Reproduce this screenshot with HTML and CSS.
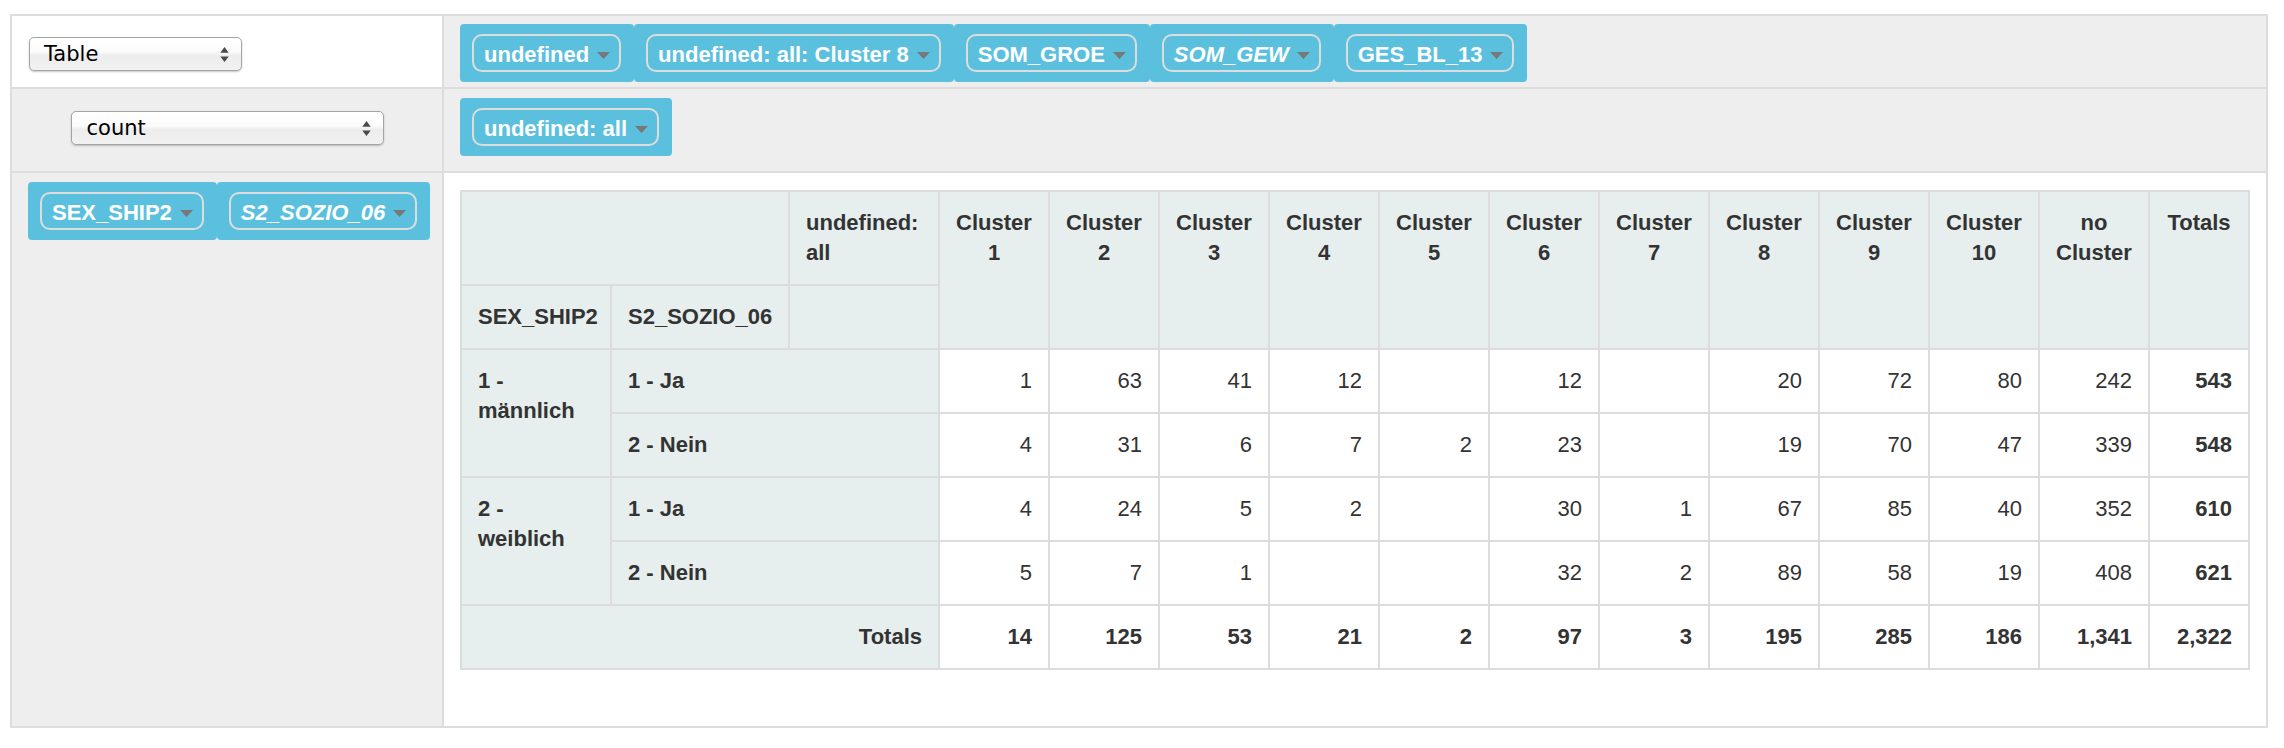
FILE: index.html
```html
<!DOCTYPE html>
<html>
<head>
<meta charset="utf-8">
<title>Pivot</title>
<link rel="stylesheet" href="styles.css">
</head>
<body>
<div class="pvt-ui">
  <div class="cell renderer-cell">
    <div class="select select-renderer"><span>Table</span><svg class="updown" viewBox="0 0 9 16"><polygon points="0,6 4.5,0 9,6"/><polygon points="0,10 4.5,16 9,10"/></svg></div>
  </div>
  <div class="cell cols-axis">
    <ul class="pills">
      <li class="pill"><span class="attr">undefined<svg class="tri" viewBox="0 0 13 7"><polygon points="0,0 13,0 6.5,7"/></svg></span></li>
      <li class="pill"><span class="attr">undefined: all: Cluster 8<svg class="tri" viewBox="0 0 13 7"><polygon points="0,0 13,0 6.5,7"/></svg></span></li>
      <li class="pill"><span class="attr">SOM_GROE<svg class="tri" viewBox="0 0 13 7"><polygon points="0,0 13,0 6.5,7"/></svg></span></li>
      <li class="pill"><span class="attr filtered">SOM_GEW<svg class="tri" viewBox="0 0 13 7"><polygon points="0,0 13,0 6.5,7"/></svg></span></li>
      <li class="pill"><span class="attr">GES_BL_13<svg class="tri" viewBox="0 0 13 7"><polygon points="0,0 13,0 6.5,7"/></svg></span></li>
    </ul>
  </div>
  <div class="cell vals-cell">
    <div class="select select-agg"><span>count</span><svg class="updown" viewBox="0 0 9 16"><polygon points="0,6 4.5,0 9,6"/><polygon points="0,10 4.5,16 9,10"/></svg></div>
  </div>
  <div class="cell vals-axis">
    <ul class="pills">
      <li class="pill"><span class="attr">undefined: all<svg class="tri" viewBox="0 0 13 7"><polygon points="0,0 13,0 6.5,7"/></svg></span></li>
    </ul>
  </div>
  <div class="cell rows-axis">
    <ul class="pills">
      <li class="pill"><span class="attr">SEX_SHIP2<svg class="tri" viewBox="0 0 13 7"><polygon points="0,0 13,0 6.5,7"/></svg></span></li>
      <li class="pill"><span class="attr filtered">S2_SOZIO_06<svg class="tri" viewBox="0 0 13 7"><polygon points="0,0 13,0 6.5,7"/></svg></span></li>
    </ul>
  </div>
  <div class="cell output">
    <table class="pvt-table">
      <colgroup>
        <col class="w150"><col class="w178"><col class="w150">
        <col class="w110"><col class="w110"><col class="w110"><col class="w110"><col class="w110"><col class="w110">
        <col class="w110"><col class="w110"><col class="w110"><col class="w110"><col class="w110">
        <col class="w100">
      </colgroup>
      <thead>
        <tr>
          <th colspan="2"></th>
          <th>undefined: all</th>
          <th class="col-label" rowspan="2">Cluster 1</th>
          <th class="col-label" rowspan="2">Cluster 2</th>
          <th class="col-label" rowspan="2">Cluster 3</th>
          <th class="col-label" rowspan="2">Cluster 4</th>
          <th class="col-label" rowspan="2">Cluster 5</th>
          <th class="col-label" rowspan="2">Cluster 6</th>
          <th class="col-label" rowspan="2">Cluster 7</th>
          <th class="col-label" rowspan="2">Cluster 8</th>
          <th class="col-label" rowspan="2">Cluster 9</th>
          <th class="col-label" rowspan="2">Cluster 10</th>
          <th class="col-label" rowspan="2">no Cluster</th>
          <th class="col-label" rowspan="2">Totals</th>
        </tr>
        <tr>
          <th>SEX_SHIP2</th>
          <th>S2_SOZIO_06</th>
          <th></th>
        </tr>
      </thead>
      <tbody>
        <tr>
          <th rowspan="2">1 - männlich</th>
          <th colspan="2">1 - Ja</th>
          <td>1</td><td>63</td><td>41</td><td>12</td><td></td><td>12</td><td></td><td>20</td><td>72</td><td>80</td><td>242</td><td class="total">543</td>
        </tr>
        <tr>
          <th colspan="2">2 - Nein</th>
          <td>4</td><td>31</td><td>6</td><td>7</td><td>2</td><td>23</td><td></td><td>19</td><td>70</td><td>47</td><td>339</td><td class="total">548</td>
        </tr>
        <tr>
          <th rowspan="2">2 - weiblich</th>
          <th colspan="2">1 - Ja</th>
          <td>4</td><td>24</td><td>5</td><td>2</td><td></td><td>30</td><td>1</td><td>67</td><td>85</td><td>40</td><td>352</td><td class="total">610</td>
        </tr>
        <tr>
          <th colspan="2">2 - Nein</th>
          <td>5</td><td>7</td><td>1</td><td></td><td></td><td>32</td><td>2</td><td>89</td><td>58</td><td>19</td><td>408</td><td class="total">621</td>
        </tr>
        <tr>
          <th colspan="3" class="totals-label">Totals</th>
          <td class="total">14</td><td class="total">125</td><td class="total">53</td><td class="total">21</td><td class="total">2</td><td class="total">97</td><td class="total">3</td><td class="total">195</td><td class="total">285</td><td class="total">186</td><td class="total">1,341</td><td class="total">2,322</td>
        </tr>
      </tbody>
    </table>
  </div>
</div>
</body>
</html>
```
FILE: styles.css
```css
* { box-sizing: border-box; }

body {
  margin: 0;
  background: #fff;
  font-family: "Liberation Sans", Arial, sans-serif;
}

.pvt-ui {
  display: grid;
  grid-template-columns: 432px 1824px;
  grid-template-rows: 73px 84px 555px;
  width: 2258px;
  margin: 14px 0 0 10px;
  border-top: 2px solid #dddddd;
  border-left: 2px solid #dddddd;
}

.cell {
  border-right: 2px solid #dddddd;
  border-bottom: 2px solid #dddddd;
  background: #eeeeee;
}

.renderer-cell {
  background: #fff;
  padding: 21px 0 0 17px;
}

.vals-cell {
  display: flex;
  justify-content: center;
  align-items: flex-start;
  padding-top: 22px;
}

.cols-axis { padding: 8px 0 0 16px; }
.vals-axis { padding: 9px 0 0 16px; }
.rows-axis { padding: 9px 0 0 16px; }

.output {
  background: #fff;
  padding: 17px 0 0 16px;
}

/* select boxes */
.select {
  display: flex;
  align-items: center;
  justify-content: space-between;
  height: 34px;
  border: 1px solid #a4a4a4;
  border-radius: 5px;
  background: linear-gradient(#ffffff 0%, #fcfcfc 42%, #ededed 55%, #f1f1f1 100%);
  box-shadow: 0 1px 2px rgba(0, 0, 0, 0.22);
  font-family: "DejaVu Sans", sans-serif;
  font-size: 21px;
  color: #000;
  padding: 0 12px 0 14px;
}

.select-renderer { width: 213px; }
.select-agg { width: 313px; padding-left: 15px; }

.updown {
  width: 9px;
  height: 15px;
  fill: #4a4a4a;
}

/* attribute pills */
.pills {
  display: flex;
  align-items: flex-start;
  list-style: none;
  margin: 0;
  padding: 0;
}

.pill {
  background: #5bc0de;
  border-radius: 4px;
  padding: 10px 13px 10px 12px;
}

.attr {
  display: flex;
  align-items: center;
  height: 38px;
  border: 2px solid #dddddd;
  border-radius: 10px;
  padding: 3px 9px 0 10px;
  color: #fff;
  font-family: "Liberation Sans", Arial, sans-serif;
  font-weight: bold;
  font-size: 22px;
  white-space: nowrap;
}

.attr.filtered { font-style: italic; }

.tri {
  width: 13px;
  height: 7px;
  margin-left: 8px;
  margin-top: 2px;
  fill: #787878;
}

/* pivot table */
.pvt-table {
  border-collapse: collapse;
  table-layout: fixed;
  width: 1790px;
  font-family: "Liberation Sans", Arial, sans-serif;
  font-size: 22px;
  line-height: 30px;
  color: #333;
}

.w150 { width: 150px; }
.w178 { width: 178px; }
.w110 { width: 110px; }
.w100 { width: 100px; }

.pvt-table th,
.pvt-table td {
  border: 2px solid #dcdcdc;
  padding: 16px;
  vertical-align: top;
}

.pvt-table th {
  background: #e6eeee;
  font-weight: bold;
  text-align: left;
}

.pvt-table th.col-label { text-align: center; }
.pvt-table th.totals-label { text-align: right; }

.pvt-table td {
  background: #fff;
  text-align: right;
}

.pvt-table td.total { font-weight: bold; }
```
